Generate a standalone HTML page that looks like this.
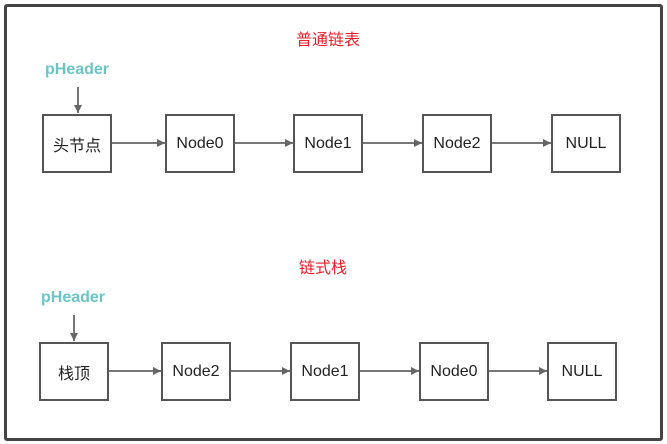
<!DOCTYPE html>
<html><head><meta charset="utf-8"><style>
body{margin:0;width:667px;height:444px;background:#fff;position:relative;overflow:hidden;font-family:"Liberation Sans","Noto Sans CJK SC",sans-serif}
.frame{position:absolute;left:4px;top:4px;width:653px;height:431px;border:3px solid #444;border-radius:3px}
.b{position:absolute;width:66px;height:55px;border:2px solid #555;background:#fff;display:flex;align-items:center;justify-content:center;font-size:16px;color:#222}
.t{position:absolute;font-size:16px;color:#e8202a}
.p{position:absolute;font-size:16px;font-weight:bold;color:#6cc4c4}
svg{position:absolute;left:0;top:0}
</style></head><body>
<div class="frame"></div>
<svg width="667" height="444">
<defs><marker id="a" markerWidth="8" markerHeight="8" refX="8" refY="4" orient="auto" markerUnits="userSpaceOnUse"><path d="M0,0 L8,4 L0,8 z" fill="#666"/></marker></defs>
<g stroke="#777" stroke-width="2" marker-end="url(#a)">
<line x1="78" y1="87" x2="78" y2="113"/>
<line x1="112" y1="143" x2="165" y2="143"/>
<line x1="235" y1="143" x2="293" y2="143"/>
<line x1="363" y1="143" x2="422" y2="143"/>
<line x1="492" y1="143" x2="551" y2="143"/>
<line x1="74" y1="315" x2="74" y2="341"/>
<line x1="109" y1="371" x2="161" y2="371"/>
<line x1="231" y1="371" x2="290" y2="371"/>
<line x1="360" y1="371" x2="419" y2="371"/>
<line x1="489" y1="371" x2="547" y2="371"/>
</g></svg>
<div class="t" style="left:296px;top:26px">普通链表</div>
<div class="t" style="left:299px;top:254px">链式栈</div>
<div class="p" style="left:45px;top:61px">pHeader</div>
<div class="p" style="left:41px;top:289px">pHeader</div>
<div class="b" style="left:42px;top:114px">头节点</div>
<div class="b" style="left:165px;top:114px">Node0</div>
<div class="b" style="left:293px;top:114px">Node1</div>
<div class="b" style="left:422px;top:114px">Node2</div>
<div class="b" style="left:551px;top:114px">NULL</div>
<div class="b" style="left:39px;top:342px">栈顶</div>
<div class="b" style="left:161px;top:342px">Node2</div>
<div class="b" style="left:290px;top:342px">Node1</div>
<div class="b" style="left:419px;top:342px">Node0</div>
<div class="b" style="left:547px;top:342px">NULL</div>
</body></html>
